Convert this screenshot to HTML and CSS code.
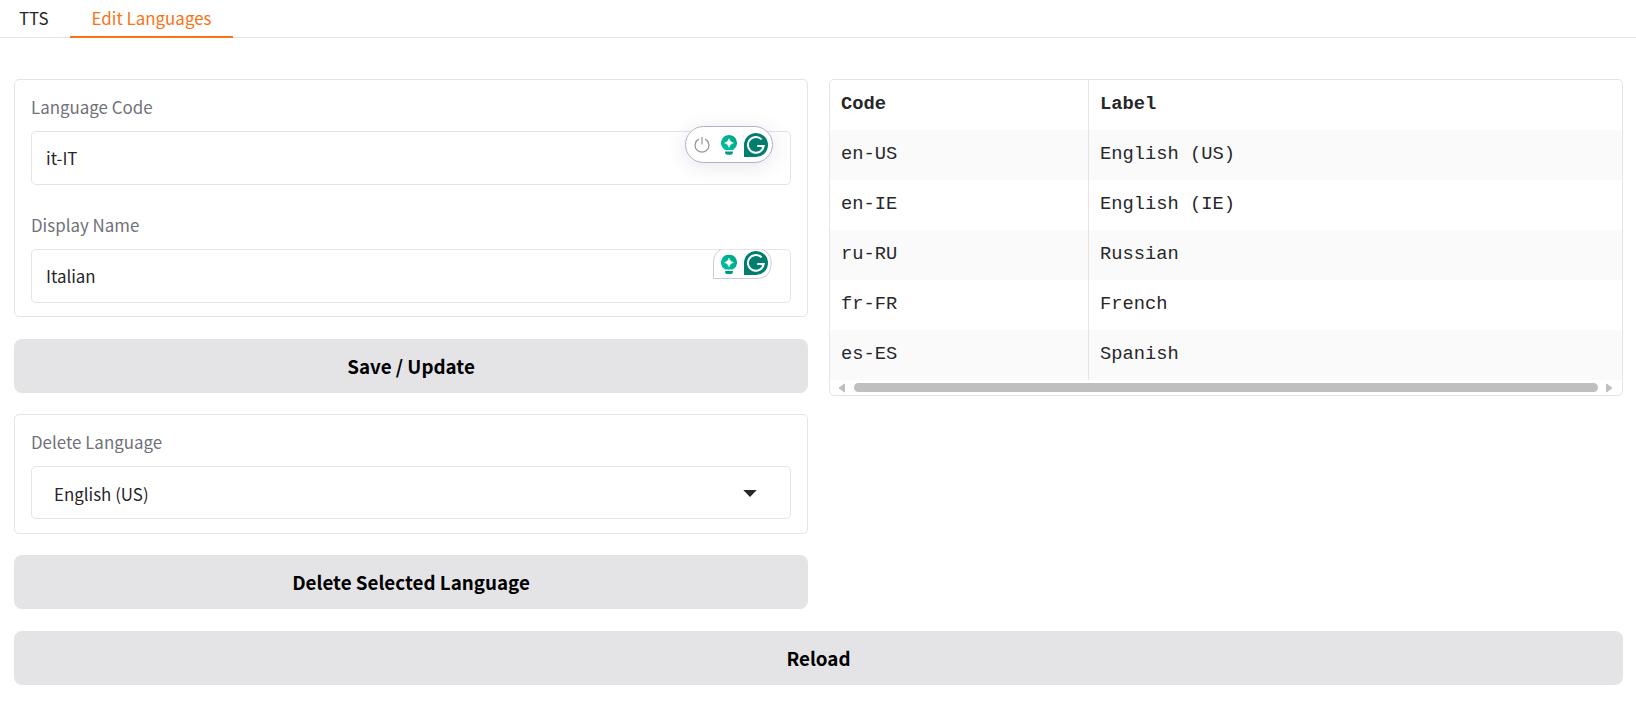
FILE: index.html
```html
<!DOCTYPE html>
<html lang="en">
<head>
<meta charset="utf-8">
<title>Edit Languages</title>
<link rel="stylesheet" href="styles.css">
</head>
<body>
<svg class="sprite" width="0" height="0" aria-hidden="true">
  <defs>
    <linearGradient id="bulb-fill" x1="1" y1="0" x2="0" y2="1"><stop offset="0" stop-color="#00a67e"/><stop offset="1" stop-color="#00bfa5"/></linearGradient>
    <symbol id="bulb" viewBox="0 0 16 20">
      <path d="M8 0a8 8 0 0 0-4.300 14.700q.4.300.8.300h7q.4 0 .8-.3A8 8 0 0 0 8 0z" fill="url(#bulb-fill)"/>
      <path d="M8 3.600Q8.800 7.200 12.400 8Q8.800 8.800 8 12.400Q7.200 8.800 3.600 8Q7.200 7.200 8 3.600z" fill="#fff" stroke="#fff" stroke-width=".5"/>
      <path d="M4 16.500h8q0 3.300-2.600 3.300H6.600Q4 19.800 4 16.500z" fill="#009b80"/>
    </symbol>
    <symbol id="gmark" viewBox="0 0 24 24">
      <path d="M12 0a12 12 0 1 1 0 24H0V12A12 12 0 0 1 12 0z" fill="#027e6f"/>
      <path d="M17.600 6.400A7.900 7.900 0 1 0 19.700 12.900H13.200M18.700 12.900V16.400" fill="none" stroke="#fff" stroke-width="2"/>
    </symbol>
  </defs>
</svg>
<nav class="tabs">
  <button class="tab">TTS</button>
  <button class="tab tab-active">Edit Languages</button>
</nav>
<main class="page">
  <div class="columns">
    <section class="column">
      <div class="card card-form">
        <label class="label" for="code">Language Code</label>
        <div class="field">
          <input class="input" id="code" value="it-IT">
          <div class="assistant assistant-full">
            <svg class="power" viewBox="0 0 16 16"><path d="M4.900 2.100A6.900 6.900 0 1 0 11.100 2.100M8 0v7.400" fill="none" stroke="#929292" stroke-width="1.200"/></svg>
            <svg class="bulb"><use href="#bulb"/></svg>
            <svg class="gmark"><use href="#gmark"/></svg>
          </div>
        </div>
        <label class="label label-second" for="name">Display Name</label>
        <div class="field">
          <input class="input" id="name" value="Italian">
          <svg class="assistant-small" viewBox="0 0 60 30">
            <path d="M.5 29.500V14Q.5 4 8 .5M50 .5Q58.300 5 58.300 14Q58.300 29.500 43 29.500H.5" fill="none" stroke="#c9cbdb"/>
            <use href="#bulb" x="8" y="5.500" width="16" height="20"/>
            <use href="#gmark" x="31" y="2" width="24" height="24"/>
          </svg>
        </div>
      </div>
      <button class="button">Save / Update</button>
      <div class="card card-delete">
        <span class="label">Delete Language</span>
        <div class="select"><span>English (US)</span>
          <svg class="caret" viewBox="0 0 14 7"><path d="M.3 0H13.700L7 7z" fill="#27272a"/></svg>
        </div>
      </div>
      <button class="button">Delete Selected Language</button>
    </section>
    <section class="table-box">
      <table class="table">
        <thead><tr><th>Code</th><th>Label</th></tr></thead>
        <tbody>
          <tr><td>en-US</td><td>English (US)</td></tr>
          <tr><td>en-IE</td><td>English (IE)</td></tr>
          <tr><td>ru-RU</td><td>Russian</td></tr>
          <tr><td>fr-FR</td><td>French</td></tr>
          <tr><td>es-ES</td><td>Spanish</td></tr>
        </tbody>
      </table>
      <div class="scrollbar">
        <svg class="arrow" viewBox="0 0 7 10"><path d="M6.500 1v8L1 5z" fill="#bfbfbf" stroke="#bfbfbf" stroke-linejoin="round"/></svg>
        <div class="thumb"></div>
        <svg class="arrow" viewBox="0 0 7 10"><path d="M.5 1v8L6 5z" fill="#bfbfbf" stroke="#bfbfbf" stroke-linejoin="round"/></svg>
      </div>
    </section>
  </div>
  <button class="button">Reload</button>
</main>
</body>
</html>
```

FILE: styles.css
```css
* { box-sizing: border-box; }
body {
  margin: 0;
  background: #fff;
  color: #27272a;
  font: 400 16.900px/26px "Noto Sans CJK SC", "Noto Sans", sans-serif;
}
button, input { font: inherit; color: inherit; }
.sprite { position: absolute; }
.tabs {
  display: flex;
  height: 38px;
  box-shadow: inset 0 -1px #e4e4e7;
}
.tab {
  height: 38px;
  border: 0;
  border-bottom: 2px solid transparent;
  background: none;
  padding: 0 22px 1px 19px;
  line-height: 35px;
  white-space: nowrap;
}
.tab:first-child { width: 70px; }
.tab-active {
  width: 163px;
  padding: 0 0 1px;
  color: #f97316;
  border-color: #f97316;
}
.page { padding: 41px 13px 0 14px; }
.columns {
  display: grid;
  grid-template-columns: 794px 794px;
  column-gap: 21px;
  align-items: start;
  margin-bottom: 22px;
}
.column { display: flex; flex-direction: column; }
.card {
  border: 1px solid #e4e4e7;
  border-radius: 5px;
  padding: 14px 16px 0;
}
.card-form { height: 238px; margin-bottom: 22px; }
.card-delete { height: 120px; margin: 21px 0; }
.label {
  display: block;
  height: 26px;
  margin-bottom: 11px;
  color: #71717a;
}
.label-second { margin-top: 27px; }
.field { position: relative; height: 54px; }
.input, .select {
  display: block;
  width: 760px;
  height: 54px;
  border: 1px solid #e4e4e7;
  border-radius: 5px;
  background: #fff;
  padding: 0 14px 2px;
  outline: 0;
}
.select {
  display: flex;
  align-items: center;
  justify-content: space-between;
  height: 53px;
  padding: 2px 33px 0 22px;
}
.caret { width: 14px; height: 7px; }
.button {
  display: block;
  width: 100%;
  height: 54px;
  border: 0;
  border-radius: 8px;
  background: #e4e4e7;
  color: #000;
  font-size: 18.800px;
  font-weight: 600;
}
.assistant {
  position: absolute;
  right: 18px;
  top: -5px;
  display: flex;
  align-items: center;
  width: 88px;
  height: 37px;
  padding-left: 8px;
  border: 1px solid #b0b2c8;
  border-radius: 19px;
  background: #fff;
  box-shadow: 0 3px 20px rgba(60, 60, 110, .13);
}
.power { width: 16px; height: 16px; }
.bulb { width: 16px; height: 20px; margin-left: 11px; }
.gmark { width: 24px; height: 24px; margin-left: 7px; }
.assistant-small {
  position: absolute;
  right: 18px;
  top: 0;
  width: 60px;
  height: 30px;
}
.table-box {
  height: 317px;
  border: 1px solid #e4e4e7;
  border-radius: 5px;
  overflow: hidden;
}
.table {
  width: 100%;
  table-layout: fixed;
  border-collapse: collapse;
  font: 18.750px/28px "Liberation Mono", monospace;
}
.table th, .table td {
  height: 50px;
  padding: 0 11px 2px;
  text-align: left;
}
.table th:first-child { width: 258px; }
.table th + th, .table td + td { box-shadow: inset 1px 0 #e4e4e7; padding-left: 12px; }
.table tbody tr:nth-child(odd) { background: #fafafa; }
.scrollbar {
  display: flex;
  align-items: center;
  justify-content: space-between;
  height: 15px;
  padding: 0 9px 0 8px;
}
.arrow { width: 7px; height: 10px; }
.thumb { width: 744px; height: 9px; border-radius: 5px; background: #bfbfbf; }
```
